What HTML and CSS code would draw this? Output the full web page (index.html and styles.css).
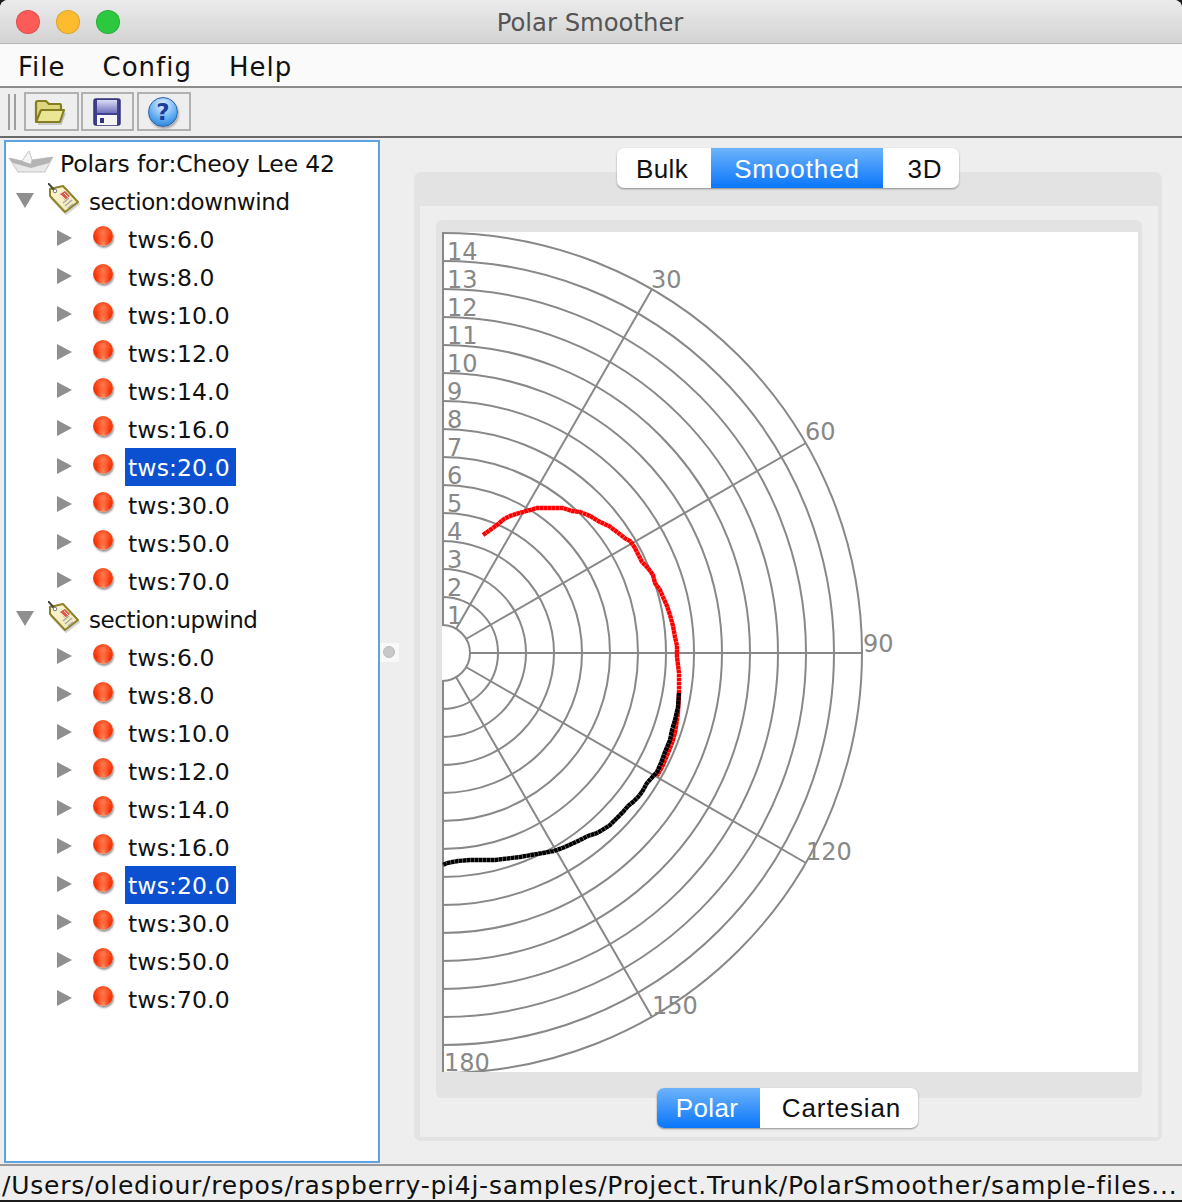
FILE: index.html
```html
<!DOCTYPE html>
<html>
  <head>
    <title>Polar Smoother</title>
    <link rel="stylesheet" href="styles.css">
  </head>
  <body>
    <svg class="defs">
      <defs>
        <linearGradient id="tag-fill" x1="0" y1="0" x2="1" y2="1">
          <stop offset="0" stop-color="#fbf5d0"/>
          <stop offset="1" stop-color="#f0e8bc"/>
        </linearGradient>
        <linearGradient id="disk-label" x1="0" y1="0" x2="0" y2="1">
          <stop offset="0" stop-color="#dcdcf6"/>
          <stop offset="1" stop-color="#7070bc"/>
        </linearGradient>
        <symbol id="tag" viewBox="0 0 32 32">
          <path d="M3 8 L15 5 L31 21 L18 31 L3 15 Z" fill="#777" opacity=".3" stroke="#777" stroke-width="2" stroke-linejoin="round"/>
          <path d="M2 6 L15 3 L30 19 L17 29 L2 13 Z" fill="url(#tag-fill)" stroke="#8f8228" stroke-width="2" stroke-linejoin="round"/>
          <path d="M0 0 L7 8" stroke="#444" stroke-width="2"/>
          <circle cx="7" cy="8" r="1.8" fill="#fff" stroke="#777"/>
          <path d="M12 11 l5 -3 l5 5 l-5 4 z" fill="#d95a50"/>
          <path d="M13 12 l5 5 M16 10 l5 5" stroke="#f3e6b8" stroke-width="1"/>
          <path d="M15 20 l6 -5 M17 23 l7 -6 M20 25 l5 -4" stroke="#a9a9a0" stroke-width="1.5"/>
        </symbol>
      </defs>
    </svg>

    <div class="titlebar">
      <div class="lights">
        <span class="light red"></span>
        <span class="light amber"></span>
        <span class="light green"></span>
      </div>
      <div class="title">Polar Smoother</div>
    </div>

    <div class="menubar">
      <span>File</span>
      <span>Config</span>
      <span>Help</span>
    </div>

    <div class="toolbar">
      <div class="grip"></div>
      <div class="tool tool-open">
        <svg class="tool-icon" width="32" height="28" viewBox="0 0 32 28">
          <path d="M2 23 L2 5 Q2 3 4 3 L12 3 L15 6 L26 6 Q27 6 27 8 L27 11" fill="#dcd67c" stroke="#857d22" stroke-width="2.2"/>
          <path d="M2 24 L7 12 L30 12 L26 24 Z" fill="#ebe596" stroke="#857d22" stroke-width="2.2" stroke-linejoin="round"/>
          <path d="M4 26 L27 26 L31 15" fill="none" stroke="#999" stroke-width="1.5" opacity=".6"/>
        </svg>
      </div>
      <div class="tool tool-save">
        <svg class="tool-icon" width="30" height="30" viewBox="0 0 30 30">
          <rect x="2" y="2" width="26" height="26" rx="2" fill="#40408f" stroke="#33337a" stroke-width="1.5"/>
          <rect x="5" y="3" width="20" height="13" fill="url(#disk-label)"/>
          <rect x="5" y="18" width="20" height="10" fill="#f6f6fa"/>
          <rect x="8" y="21" width="4" height="5" fill="#33337a"/>
        </svg>
      </div>
      <div class="tool tool-help">
        <span class="help-ball">?</span>
      </div>
    </div>

    <div class="main">
      <div class="tree">
        <div class="row root">
          <svg class="boat" width="46" height="26" viewBox="0 0 46 26">
            <path d="M1 9 L14 12 L21 2 L24 11 L45 8 L37 23 L10 23 Z" fill="#e8e8e8" stroke="#c4c4c4"/>
            <path d="M21 2 L24 11 L22 18 L14 12 Z" fill="#f4f4f4" stroke="#cfcfcf"/>
            <path d="M1 9 L14 12 L23 15 L24 11 L45 8 L41 14 L23 19 L5 14 Z" fill="#b4b4b4"/>
          </svg>
          <span class="label">Polars for:Cheoy Lee 42</span>
        </div>

        <div class="row section">
          <span class="arrow-down"></span>
          <svg class="tag" width="32" height="32"><use href="#tag"/></svg>
          <span class="label">section:downwind</span>
        </div>
        <div class="row leaf"><span class="arrow-right"></span><span class="ball"></span><span class="label">tws:6.0</span></div>
        <div class="row leaf"><span class="arrow-right"></span><span class="ball"></span><span class="label">tws:8.0</span></div>
        <div class="row leaf"><span class="arrow-right"></span><span class="ball"></span><span class="label">tws:10.0</span></div>
        <div class="row leaf"><span class="arrow-right"></span><span class="ball"></span><span class="label">tws:12.0</span></div>
        <div class="row leaf"><span class="arrow-right"></span><span class="ball"></span><span class="label">tws:14.0</span></div>
        <div class="row leaf"><span class="arrow-right"></span><span class="ball"></span><span class="label">tws:16.0</span></div>
        <div class="row leaf"><span class="arrow-right"></span><span class="ball"></span><span class="label selected">tws:20.0</span></div>
        <div class="row leaf"><span class="arrow-right"></span><span class="ball"></span><span class="label">tws:30.0</span></div>
        <div class="row leaf"><span class="arrow-right"></span><span class="ball"></span><span class="label">tws:50.0</span></div>
        <div class="row leaf"><span class="arrow-right"></span><span class="ball"></span><span class="label">tws:70.0</span></div>

        <div class="row section">
          <span class="arrow-down"></span>
          <svg class="tag" width="32" height="32"><use href="#tag"/></svg>
          <span class="label">section:upwind</span>
        </div>
        <div class="row leaf"><span class="arrow-right"></span><span class="ball"></span><span class="label">tws:6.0</span></div>
        <div class="row leaf"><span class="arrow-right"></span><span class="ball"></span><span class="label">tws:8.0</span></div>
        <div class="row leaf"><span class="arrow-right"></span><span class="ball"></span><span class="label">tws:10.0</span></div>
        <div class="row leaf"><span class="arrow-right"></span><span class="ball"></span><span class="label">tws:12.0</span></div>
        <div class="row leaf"><span class="arrow-right"></span><span class="ball"></span><span class="label">tws:14.0</span></div>
        <div class="row leaf"><span class="arrow-right"></span><span class="ball"></span><span class="label">tws:16.0</span></div>
        <div class="row leaf"><span class="arrow-right"></span><span class="ball"></span><span class="label selected">tws:20.0</span></div>
        <div class="row leaf"><span class="arrow-right"></span><span class="ball"></span><span class="label">tws:30.0</span></div>
        <div class="row leaf"><span class="arrow-right"></span><span class="ball"></span><span class="label">tws:50.0</span></div>
        <div class="row leaf"><span class="arrow-right"></span><span class="ball"></span><span class="label">tws:70.0</span></div>
      </div>

      <div class="splitter"><span class="splitter-dot"></span></div>

      <div class="content">
        <div class="segments tabs">
          <span class="segment bulk">Bulk</span>
          <span class="segment on smoothed">Smoothed</span>
          <span class="segment threed">3D</span>
        </div>
        <div class="pane">
          <div class="pane-body">
            <div class="chart-box">
              <svg class="chart" width="696" height="840" viewBox="442 232 696 840">
                <g class="rings">
                  <path d="M442 625 A28 28 0 0 1 442 681"/>
                  <path d="M442 597 A56 56 0 0 1 442 709"/>
                  <path d="M442 569 A84 84 0 0 1 442 737"/>
                  <path d="M442 541 A112 112 0 0 1 442 765"/>
                  <path d="M442 513 A140 140 0 0 1 442 793"/>
                  <path d="M442 485 A168 168 0 0 1 442 821"/>
                  <path d="M442 457 A196 196 0 0 1 442 849"/>
                  <path d="M442 429 A224 224 0 0 1 442 877"/>
                  <path d="M442 401 A252 252 0 0 1 442 905"/>
                  <path d="M442 373 A280 280 0 0 1 442 933"/>
                  <path d="M442 345 A308 308 0 0 1 442 961"/>
                  <path d="M442 317 A336 336 0 0 1 442 989"/>
                  <path d="M442 289 A364 364 0 0 1 442 1017"/>
                  <path d="M442 261 A392 392 0 0 1 442 1045"/>
                  <path d="M442 233 A420 420 0 0 1 442 1073"/>
                  <path d="M443 233 L443 625 M443 681 L443 1073"/>
                  <path d="M456 629 L652 289 M466 639 L806 443 M470 653 L862 653 M466 667 L806 863 M456 677 L652 1017"/>
                </g>
                <g class="chart-text">
                  <text x="447" y="260">14</text>
                  <text x="447" y="288">13</text>
                  <text x="447" y="316">12</text>
                  <text x="447" y="344">11</text>
                  <text x="447" y="372">10</text>
                  <text x="447" y="400">9</text>
                  <text x="447" y="428">8</text>
                  <text x="447" y="456">7</text>
                  <text x="447" y="484">6</text>
                  <text x="447" y="512">5</text>
                  <text x="447" y="540">4</text>
                  <text x="447" y="568">3</text>
                  <text x="447" y="596">2</text>
                  <text x="447" y="624">1</text>
                  <text x="651" y="288">30</text>
                  <text x="805" y="440">60</text>
                  <text x="863" y="652">90</text>
                  <text x="806" y="860">120</text>
                  <text x="652" y="1014">150</text>
                  <text x="444" y="1071">180</text>
                </g>
                <polyline class="curve curve-red" points="483,535 490,530 497,525 504,519 510,516 519,513 527,511 537,508 563,508 572,511 580,512 590,516 600,522 609,526 617,532 626,539 630,541 635,548 642,562 648,568 653,575 655,583 660,590 663,597 667,606 670,615 673,626 675,637 677,646 677,657 679,673 679,693 678,713 675,733 672,743 668,753 663,765 657,776"/>
                <polyline class="curve curve-black" points="679,693 678,707 675,720 672,730 670,740 665,752 661,763 657,772 647,783 642,792 638,797 633,802 628,806 623,812 616,819 610,825 604,829 597,833 588,836 578,841 565,847 554,851 543,853 531,855 520,857 503,859 495,860 470,860 458,861 447,863 443,865"/>
              </svg>
            </div>
            <div class="segments views">
              <span class="segment on polar">Polar</span>
              <span class="segment cartesian">Cartesian</span>
            </div>
          </div>
        </div>
      </div>
    </div>

    <div class="statusbar">/Users/olediour/repos/raspberry-pi4j-samples/Project.Trunk/PolarSmoother/sample-files...</div>
  </body>
</html>
```

FILE: styles.css
```css
html {
  background: #1c1c1c;
}
body {
  display: flex;
  flex-direction: column;
  width: 1182px;
  height: 1200px;
  margin: 0;
  overflow: hidden;
  background: #eeeeee;
  border-radius: 8px 8px 0 0;
  font-family: "DejaVu Sans", sans-serif;
  font-size: 23.5px;
  color: #111;
}
.defs {
  position: absolute;
  width: 0;
  height: 0;
}

/* window chrome */
.titlebar {
  position: relative;
  display: flex;
  align-items: center;
  justify-content: center;
  height: 44px;
  flex: none;
  padding-top: 2px;
  box-sizing: border-box;
  background: linear-gradient(#ebebeb, #d3d3d3);
  border-bottom: 1px solid #b4b4b4;
}
.lights {
  position: absolute;
  left: 16px;
  top: 10px;
  display: flex;
  gap: 16px;
}
.light {
  width: 24px;
  height: 24px;
  box-sizing: border-box;
  border-radius: 50%;
  border: 1px solid rgba(0, 0, 0, 0.12);
}
.red { background: #fc5b57; }
.amber { background: #fdbb2e; }
.green { background: #2cc840; }
.title {
  margin-left: -2px;
  font-size: 24.3px;
  color: #555;
}

.menubar {
  display: flex;
  gap: 37px;
  align-items: center;
  height: 44px;
  flex: none;
  padding: 3px 0 0 18px;
  box-sizing: border-box;
  background: #fafafa;
  border-bottom: 2px solid #8c8c8c;
  font-size: 26px;
  letter-spacing: 1px;
}

.toolbar {
  display: flex;
  align-items: flex-start;
  height: 50px;
  flex: none;
  padding: 4px 0 0 8px;
  box-sizing: border-box;
  border-bottom: 2px solid #6a6a6a;
}
.grip {
  width: 8px;
  height: 36px;
  box-sizing: border-box;
  margin: 2px 8px 0 0;
  border-left: 2px solid #9e9e9e;
  border-right: 2px solid #9e9e9e;
}
.tool {
  display: flex;
  align-items: center;
  justify-content: center;
  height: 39px;
  box-sizing: border-box;
  border: 2px solid #b0b0b0;
  margin-right: 2px;
}
.tool-open { width: 55px; }
.tool-open .tool-icon { margin-right: 3px; }
.tool-save { width: 53px; }
.tool-save .tool-icon { margin-right: 2px; }
.tool-help { width: 54px; margin-left: 1px; }
.help-ball {
  display: block;
  width: 30px;
  height: 30px;
  margin-right: 2px;
  border-radius: 50%;
  background: radial-gradient(circle at 50% 25%, #e4f2ff, #5aa8ef 60%, #1c6fd0);
  border: 1px solid #2a5fa8;
  box-sizing: border-box;
  box-shadow: 1px 2px 2px #aaa;
  text-align: center;
  line-height: 28px;
  font-size: 23px;
  font-weight: bold;
  color: #1a3f9a;
}

/* body of the window */
.main {
  position: relative;
  display: flex;
  flex: 1;
  min-height: 0;
  padding: 2px 20px 0 4px;
}

/* tree */
.tree {
  width: 376px;
  height: 1023px;
  box-sizing: border-box;
  padding-top: 2px;
  background: #fff;
  border: 2px solid #5ca3e2;
}
.row {
  display: flex;
  align-items: center;
  height: 38px;
  white-space: nowrap;
}
.root { padding-left: 2px; }
.boat { margin: -2px 3px 0 0; }
.root .label { letter-spacing: -0.15px; }
.section { padding-left: 10px; }
.section .label { font-size: 23px; letter-spacing: -0.4px; }
.leaf { padding-left: 51px; }
.arrow-down {
  width: 0;
  height: 0;
  border-left: 9px solid transparent;
  border-right: 9px solid transparent;
  border-top: 15px solid #8f8f8f;
  margin: -2px 14px 0 0;
}
.tag {
  margin: -4px 6px 0 0;
}
.arrow-right {
  width: 0;
  height: 0;
  border-top: 8px solid transparent;
  border-bottom: 8px solid transparent;
  border-left: 15px solid #8f8f8f;
  margin: -2px 21px 0 0;
}
.ball {
  width: 20px;
  height: 20px;
  margin: -6px 12px 0 0;
  border-radius: 50%;
  background:
    radial-gradient(ellipse at 50% 95%, #ff8a5e, rgba(255, 100, 60, 0) 50%),
    radial-gradient(circle at 50% 30%, #ff7a50, #f83a0c 50%, #e82400);
  box-shadow: 1px 2px 2px #999;
}
.label {
  padding: 2px 6px 0 3px;
  line-height: 36px;
  letter-spacing: 0.1px;
}
.selected {
  background: #0b50d0;
  color: #fff;
}

.splitter {
  position: absolute;
  left: 380px;
  top: 505px;
  width: 19px;
  height: 19px;
  background: #f8f8f8;
}
.splitter-dot {
  display: block;
  width: 12px;
  height: 12px;
  margin: 3px 0 0 3px;
  border-radius: 50%;
  background: #c8c8c8;
  border: 1px solid #bbb;
  box-sizing: border-box;
}

/* tabbed panel */
.content {
  display: flex;
  flex-direction: column;
  flex: 1;
  margin-left: 34px;
}
.segments {
  position: relative;
  display: flex;
  align-self: center;
  height: 40px;
  border-radius: 7px;
  background: #fff;
  box-shadow: 0 1px 2px rgba(0, 0, 0, 0.4);
  font-family: "Liberation Sans", sans-serif;
  font-size: 26px;
  letter-spacing: 0.9px;
}
.segment {
  display: flex;
  align-items: center;
  justify-content: center;
  height: 100%;
  box-sizing: border-box;
}
.segment.on {
  background: linear-gradient(#6db3fb, #0a76fa);
  color: #fff;
}
.tabs {
  margin-top: 8px;
}
.tabs .segment { padding-top: 2px; }
.bulk { width: 94px; padding-right: 4px; letter-spacing: 0.4px; }
.smoothed { width: 172px; }
.threed { width: 76px; padding-left: 8px; }
.views {
  margin-top: -10px;
  margin-left: -4px;
}
.polar { width: 103px; padding-right: 2px; border-radius: 7px 0 0 7px; letter-spacing: 0.4px; }
.cartesian { width: 158px; padding-left: 6px; }

.pane {
  display: flex;
  flex-direction: column;
  height: 969px;
  margin-top: -16px;
  box-sizing: border-box;
  padding: 34px 4px 4px 6px;
  background: #e3e3e3;
  border-radius: 7px;
}
.pane-body {
  display: flex;
  flex-direction: column;
  flex: 1;
  padding: 14px 16px 0;
  background: #eeeeee;
}
.chart-box {
  height: 878px;
  box-sizing: border-box;
  padding: 12px 4px 0 6px;
  background: #e3e3e3;
  border-radius: 6px;
}
.chart {
  display: block;
  background: #fff;
}
.rings path {
  fill: none;
  stroke: #888;
  stroke-width: 2;
}
.chart-text text {
  font-size: 24px;
  fill: #888;
}
.curve {
  fill: none;
  stroke-width: 4.4;
  stroke-dasharray: 3.7 0.3;
}
.curve-red { stroke: #f00; }
.curve-black { stroke: #000; }

.statusbar {
  flex: none;
  height: 36px;
  box-sizing: border-box;
  border-top: 2px solid #999;
  padding-left: 2px;
  line-height: 40px;
  font-size: 25px;
  letter-spacing: 0.76px;
  white-space: nowrap;
  overflow: hidden;
}
```
